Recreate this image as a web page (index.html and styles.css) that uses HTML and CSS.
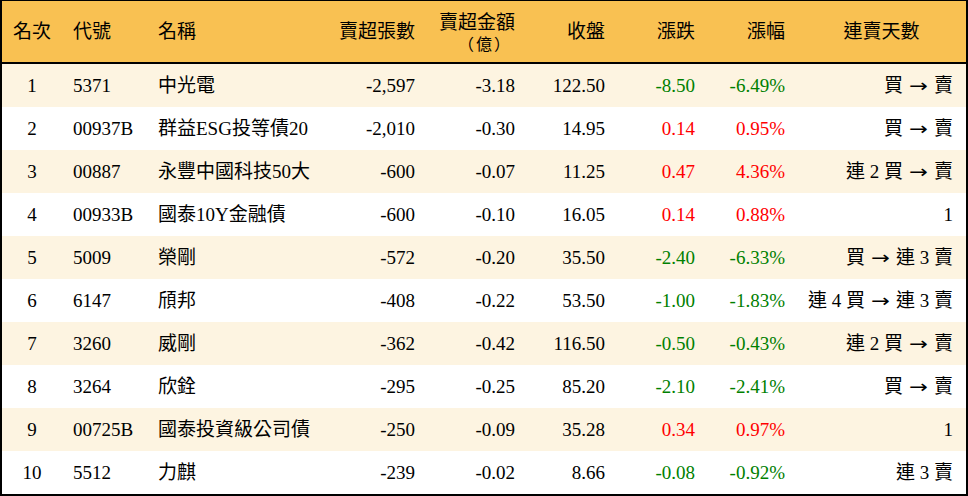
FILE: index.html
```html
<!DOCTYPE html>
<html lang="zh-Hant">
<head>
<meta charset="utf-8">
<title>賣超排行</title>
<link rel="stylesheet" href="styles.css">
</head>
<body>
<div class="frame">
<table class="rank">
<colgroup>
<col class="w-rank"><col class="w-code"><col class="w-name"><col class="w-num"><col class="w-num"><col class="w-px"><col class="w-px"><col class="w-px"><col class="w-days">
</colgroup>
<thead>
<tr>
<th class="ctr">名次</th>
<th class="lft">代號</th>
<th class="lft">名稱</th>
<th class="rgt">賣超張數</th>
<th class="rgt two"><span class="line">賣超金額</span><span class="line unit">（億）</span></th>
<th class="rgt">收盤</th>
<th class="rgt">漲跌</th>
<th class="rgt">漲幅</th>
<th class="ctr">連賣天數</th>
</tr>
</thead>
<tbody>
<tr class="alt"><td class="ctr">1</td><td class="lft">5371</td><td class="lft">中光電</td><td class="rgt">-2,597</td><td class="rgt">-3.18</td><td class="rgt">122.50</td><td class="rgt dn">-8.50</td><td class="rgt dn">-6.49%</td><td class="days">買<span class="arr">→</span>賣</td></tr>
<tr><td class="ctr">2</td><td class="lft">00937B</td><td class="lft">群益ESG投等債20</td><td class="rgt">-2,010</td><td class="rgt">-0.30</td><td class="rgt">14.95</td><td class="rgt up">0.14</td><td class="rgt up">0.95%</td><td class="days">買<span class="arr">→</span>賣</td></tr>
<tr class="alt"><td class="ctr">3</td><td class="lft">00887</td><td class="lft">永豐中國科技50大</td><td class="rgt">-600</td><td class="rgt">-0.07</td><td class="rgt">11.25</td><td class="rgt up">0.47</td><td class="rgt up">4.36%</td><td class="days">連 2 買<span class="arr">→</span>賣</td></tr>
<tr><td class="ctr">4</td><td class="lft">00933B</td><td class="lft">國泰10Y金融債</td><td class="rgt">-600</td><td class="rgt">-0.10</td><td class="rgt">16.05</td><td class="rgt up">0.14</td><td class="rgt up">0.88%</td><td class="days">1</td></tr>
<tr class="alt"><td class="ctr">5</td><td class="lft">5009</td><td class="lft">榮剛</td><td class="rgt">-572</td><td class="rgt">-0.20</td><td class="rgt">35.50</td><td class="rgt dn">-2.40</td><td class="rgt dn">-6.33%</td><td class="days">買<span class="arr">→</span>連 3 賣</td></tr>
<tr><td class="ctr">6</td><td class="lft">6147</td><td class="lft">頎邦</td><td class="rgt">-408</td><td class="rgt">-0.22</td><td class="rgt">53.50</td><td class="rgt dn">-1.00</td><td class="rgt dn">-1.83%</td><td class="days">連 4 買<span class="arr">→</span>連 3 賣</td></tr>
<tr class="alt"><td class="ctr">7</td><td class="lft">3260</td><td class="lft">威剛</td><td class="rgt">-362</td><td class="rgt">-0.42</td><td class="rgt">116.50</td><td class="rgt dn">-0.50</td><td class="rgt dn">-0.43%</td><td class="days">連 2 買<span class="arr">→</span>賣</td></tr>
<tr><td class="ctr">8</td><td class="lft">3264</td><td class="lft">欣銓</td><td class="rgt">-295</td><td class="rgt">-0.25</td><td class="rgt">85.20</td><td class="rgt dn">-2.10</td><td class="rgt dn">-2.41%</td><td class="days">買<span class="arr">→</span>賣</td></tr>
<tr class="alt"><td class="ctr">9</td><td class="lft">00725B</td><td class="lft">國泰投資級公司債</td><td class="rgt">-250</td><td class="rgt">-0.09</td><td class="rgt">35.28</td><td class="rgt up">0.34</td><td class="rgt up">0.97%</td><td class="days">1</td></tr>
<tr><td class="ctr">10</td><td class="lft">5512</td><td class="lft">力麒</td><td class="rgt">-239</td><td class="rgt">-0.02</td><td class="rgt">8.66</td><td class="rgt dn">-0.08</td><td class="rgt dn">-0.92%</td><td class="days">連 3 賣</td></tr>
</tbody>
</table>
</div>
</body>
</html>
```
FILE: styles.css
```css
html, body {
  margin: 0;
  padding: 0;
  background: #ffffff;
}
body {
  font-family: "Liberation Serif", "Noto Sans CJK TC", serif;
  font-size: 19px;
  color: #000000;
}
.frame {
  width: 968px;
  height: 496px;
  box-sizing: border-box;
  border: 2px solid #000000;
  border-top-width: 1px;
  overflow: hidden;
}
.rank {
  width: 100%;
  border-spacing: 0;
  table-layout: fixed;
}
.w-rank { width: 60px; }
.w-code { width: 85px; }
.w-name { width: 180px; }
.w-num { width: 100px; }
.w-px { width: 90px; }
.w-days { width: 169px; }

.rank th {
  height: 61px;
  padding: 0;
  background: #f9c152;
  border-bottom: 2px solid #000000;
  font-weight: normal;
  line-height: 20px;
  vertical-align: middle;
}
.line {
  display: block;
  height: 22px;
  line-height: 22px;
}
.unit {
  letter-spacing: 2px;
  margin-right: 3px;
  font-family: "Noto Sans CJK TC", sans-serif;
  font-size: 16px;
  line-height: 18px;
  height: 18px;
}
.rank td {
  height: 43px;
  padding: 0;
  line-height: 20px;
  vertical-align: middle;
  white-space: nowrap;
}
.rank tr.alt td {
  background: #fdf4e1;
}
.arr {
  display: inline-block;
  width: 19px;
  margin: 0 6px;
  text-align: center;
  font-family: "DejaVu Sans", sans-serif;
  font-size: 18px;
  transform: scaleX(1.25);
}
.ctr { text-align: center; }
.lft { text-align: left; padding-left: 11px !important; }
.rgt { text-align: right; padding-right: 12px !important; }
.days { text-align: right; padding-right: 13px !important; }
.up { color: #ff0000; }
.dn { color: #008000; }
```
